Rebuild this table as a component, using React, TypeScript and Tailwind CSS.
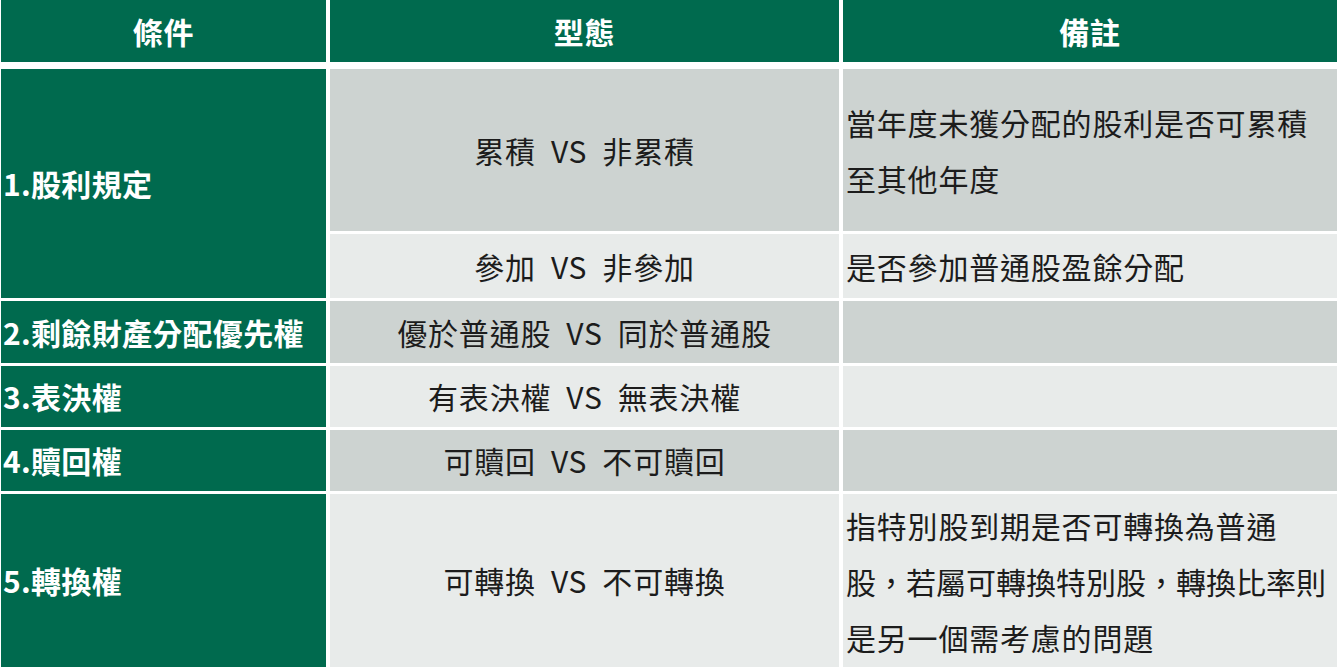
const green = "bg-[#006a4e]";
const dark = "bg-[#cdd3d1]";
const light = "bg-[#e8ebea]";

type Row = {
  name: string;
  type: string;
  note?: string[];
  bg: string;
  h: string;
};

const rows: Row[] = [
  { name: "2.剩餘財產分配優先權", type: "優於普通股\u00a0\u00a0VS\u00a0\u00a0同於普通股", bg: dark, h: "h-[62px]" },
  { name: "3.表決權", type: "有表決權\u00a0\u00a0VS\u00a0\u00a0無表決權", bg: light, h: "h-[61px]" },
  { name: "4.贖回權", type: "可贖回\u00a0\u00a0VS\u00a0\u00a0不可贖回", bg: dark, h: "h-[61px]" },
  {
    name: "5.轉換權",
    type: "可轉換\u00a0\u00a0VS\u00a0\u00a0不可轉換",
    note: ["指特別股到期是否可轉換為普通", "股，若屬可轉換特別股，轉換比率則", "是另一個需考慮的問題"],
    bg: light,
    h: "h-[173px]",
  },
];

function NameCell({ children, className = "" }: { children: React.ReactNode; className?: string }) {
  return (
    <div className={`${green} ${className} flex items-center pl-[2px] font-bold tracking-[0.3px] text-white`}>
      {children}
    </div>
  );
}

function TypeCell({ children, bg, className = "" }: { children: React.ReactNode; bg: string; className?: string }) {
  return <div className={`${bg} ${className} flex items-center justify-center text-[#1c1c1c]`}>{children}</div>;
}

function NoteCell({ lines, bg, className = "" }: { lines?: string[]; bg: string; className?: string }) {
  return (
    <div className={`${bg} ${className} flex flex-col justify-center pl-[3px] leading-[56px] text-[#1c1c1c]`}>
      {lines?.map((l) => (
        <div key={l} className={l.length > 15 ? "whitespace-nowrap tracking-[0px]" : "whitespace-nowrap"}>
          {l}
        </div>
      ))}
    </div>
  );
}

export default function App() {
  return (
    <div
      className="h-[667px] w-[1337px] overflow-hidden bg-white text-[30px] tracking-[0.8px]"
      style={{ fontFamily: '"Noto Sans CJK TC", "Noto Sans", sans-serif' }}
    >
      {/* header */}
      <div className="grid h-[62px] grid-cols-[325px_509px_494px] gap-x-[4px] pl-px font-bold text-white">
        <div className={`${green} flex items-center justify-center`}>條件</div>
        <div className={`${green} flex items-center justify-center`}>型態</div>
        <div className={`${green} flex items-center justify-center`}>備註</div>
      </div>

      {/* body */}
      <div className="mt-[7px] grid grid-cols-[325px_509px_494px] gap-x-[4px] gap-y-[3px] pl-px">
        <NameCell className="row-span-2">1.股利規定</NameCell>
        <TypeCell bg={dark} className="h-[162px]">
          {"累積\u00a0\u00a0VS\u00a0\u00a0非累積"}
        </TypeCell>
        <NoteCell bg={dark} lines={["當年度未獲分配的股利是否可累積", "至其他年度"]} />

        <TypeCell bg={light} className="h-[64px]">
          {"參加\u00a0\u00a0VS\u00a0\u00a0非參加"}
        </TypeCell>
        <NoteCell bg={light} lines={["是否參加普通股盈餘分配"]} />

        {rows.map((r) => (
          <div key={r.name} className="contents">
            <NameCell className={r.h}>{r.name}</NameCell>
            <TypeCell bg={r.bg}>{r.type}</TypeCell>
            <NoteCell bg={r.bg} lines={r.note} />
          </div>
        ))}
      </div>
    </div>
  );
}
